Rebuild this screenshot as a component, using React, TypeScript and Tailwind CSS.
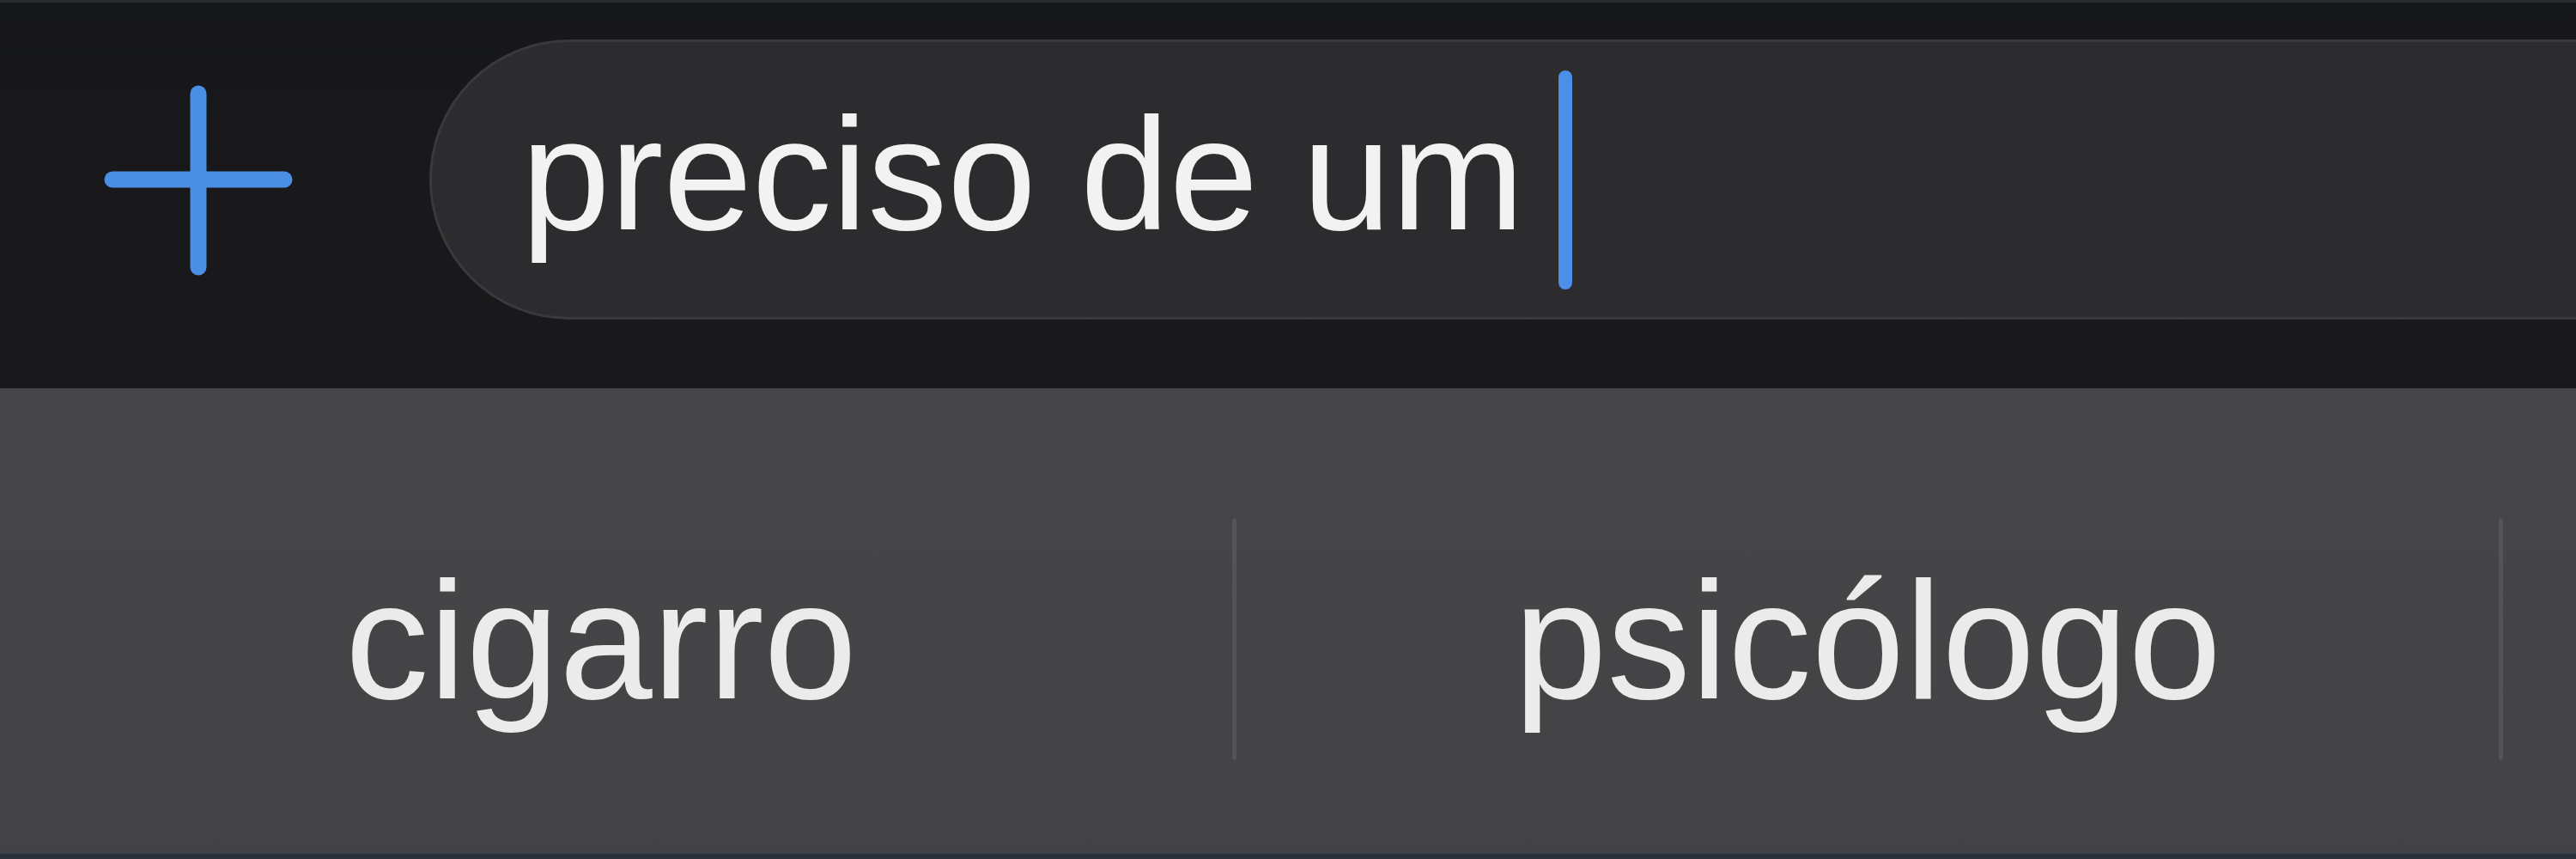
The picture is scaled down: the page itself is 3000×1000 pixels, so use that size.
import { useState } from "react";

const SUGGESTIONS = ["cigarro", "psicólogo", ""];

const PlusIcon = () => (
  <svg width="240" height="240" viewBox="0 0 240 240" className="shrink-0 mt-[86px] ml-[111px]">
    <g stroke="#4a8fe3" strokeWidth="19" strokeLinecap="round">
      <line x1="120" y1="20" x2="120" y2="222" />
      <line x1="20" y1="120" x2="220" y2="120" />
    </g>
  </svg>
);

const App = () => {
  const [text] = useState("preciso de um");

  return (
    <div className="w-[3000px] h-[1000px] overflow-hidden flex flex-col bg-[#18181b] font-['Liberation_Sans',Arial,sans-serif]">
      <div className="h-[3px] bg-[#2b2c31]" />

      {/* input bar */}
      <div className="h-[449px] flex items-start bg-gradient-to-b from-[#16171b] via-[#19191b] to-[#19191b]">
        <PlusIcon />
        <div className="ml-[149px] mt-[43px] mr-[-200px] flex-1 h-[326px] rounded-full border-[3px] border-[#3a3a3d] bg-[#2c2c2f] flex items-start pl-[104px]">
          <span className="mt-[61px] text-[186px] leading-none text-[#f2f2f2] whitespace-pre">{text}</span>
          <span className="ml-[40px] mt-[33px] w-[16px] h-[255px] rounded-full bg-[#4b8fe6]" />
        </div>
      </div>

      {/* suggestions */}
      <div className="flex-1 flex items-start ml-[-35px] bg-gradient-to-b from-[#464648] to-[#434345]">
        {SUGGESTIONS.map((word, i) => (
          <div key={i} className="flex items-start">
            {i > 0 && <div className="mt-[151px] w-[5px] h-[282px] rounded-full bg-[#545457]" />}
            <div className="w-[1470px] flex justify-center">
              <span className="mt-[196px] text-[195px] leading-none text-[#ebebeb]">{word}</span>
            </div>
          </div>
        ))}
      </div>

      <div className="h-[8px] bg-[#2b2f38] border-t-2 border-[#3d414c]" />
    </div>
  );
};

export default App;
